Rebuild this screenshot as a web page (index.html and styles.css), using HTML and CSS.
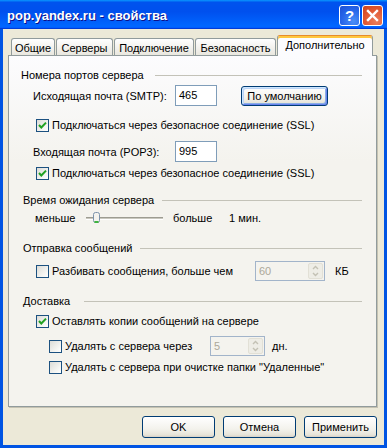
FILE: index.html
```html
<!DOCTYPE html>
<html lang="ru">
<head>
    <meta charset="UTF-8">
    <title>pop.yandex.ru - свойства</title>
    <link rel="stylesheet" href="styles.css">
</head>
<body>
    <div class="window">
        <div class="titlebar">
            <span class="title">pop.yandex.ru - свойства</span>
            <div class="title-buttons">
                <span class="tbtn help">?</span>
                <span class="tbtn close">
                    <svg width="19" height="19" viewBox="0 0 19 19"><path d="M5 5 L14 14 M14 5 L5 14" stroke="#fff" stroke-width="2.4" stroke-linecap="square"/></svg>
                </span>
            </div>
        </div>

        <div class="frame">
            <div class="tabs">
                <span class="tab tab-general">Общие</span>
                <span class="tab tab-servers">Серверы</span>
                <span class="tab tab-connect">Подключение</span>
                <span class="tab tab-security">Безопасность</span>
                <span class="tab tab-advanced active">Дополнительно</span>
            </div>

            <div class="panel">
                <div class="group-head first">
                    <span class="group-title w-ports">Номера портов сервера</span>
                    <i class="rule"></i>
                </div>
                <div class="row port-row">
                    <span class="port-label">Исходящая почта (SMTP):</span>
                    <span class="textbox">465</span>
                    <span class="button default">По умолчанию</span>
                </div>
                <div class="row cb-row ssl-1">
                    <span class="check on"><svg width="11" height="11" viewBox="0 0 11 11"><path d="M2 5 L4.3 7.5 L9 2.6" fill="none" stroke="#21a121" stroke-width="2"/></svg></span>
                    <span>Подключаться через безопасное соединение (SSL)</span>
                </div>
                <div class="row port-row pop-row">
                    <span class="port-label">Входящая почта (POP3):</span>
                    <span class="textbox">995</span>
                </div>
                <div class="row cb-row ssl-2">
                    <span class="check on"><svg width="11" height="11" viewBox="0 0 11 11"><path d="M2 5 L4.3 7.5 L9 2.6" fill="none" stroke="#21a121" stroke-width="2"/></svg></span>
                    <span>Подключаться через безопасное соединение (SSL)</span>
                </div>

                <div class="group-head">
                    <span class="group-title w-timeout">Время ожидания сервера</span>
                    <i class="rule"></i>
                </div>
                <div class="row slider-row">
                    <span class="slider-label">меньше</span>
                    <svg class="slider" width="77" height="14" viewBox="0 0 77 14">
                        <path d="M0.5 9 V6.5 H2" stroke="#9a9a90" fill="none"/>
                        <rect x="0" y="6" width="77" height="1" fill="#9d9c92"/>
                        <rect x="0" y="7" width="77" height="1" fill="#c9c8bf"/>
                        <rect x="0" y="8" width="77" height="1" fill="#fff"/>
                        <rect x="7.5" y="1.5" width="6" height="10" rx="2" fill="#f4f3ee" stroke="#7c93ab"/>
                        <rect x="8.5" y="10" width="4" height="2" fill="#3fb43f"/>
                    </svg>
                    <span class="more-label">больше</span>
                    <span>1 мин.</span>
                </div>

                <div class="group-head">
                    <span class="group-title w-send">Отправка сообщений</span>
                    <i class="rule"></i>
                </div>
                <div class="row cb-row spin-row split-row">
                    <span class="cb-text split-text">
                        <span class="check"></span>
                        <span>Разбивать сообщения, больше чем</span>
                    </span>
                    <span class="spin spin-kb">
                        <span class="spin-value">60</span>
                        <span class="spin-arrows">
                            <svg width="13" height="16" viewBox="0 0 13 16"><path d="M4 6 L6.5 3.5 L9 6 M4 10 L6.5 12.5 L9 10" fill="none" stroke="#c3c1b4" stroke-width="1.4"/></svg>
                        </span>
                    </span>
                    <span class="unit">КБ</span>
                </div>

                <div class="group-head">
                    <span class="group-title w-delivery">Доставка</span>
                    <i class="rule"></i>
                </div>
                <div class="row cb-row keep-row">
                    <span class="check on"><svg width="11" height="11" viewBox="0 0 11 11"><path d="M2 5 L4.3 7.5 L9 2.6" fill="none" stroke="#21a121" stroke-width="2"/></svg></span>
                    <span>Оставлять копии сообщений на сервере</span>
                </div>
                <div class="row cb-row spin-row sub-row days-row">
                    <span class="cb-text days-text">
                        <span class="check"></span>
                        <span>Удалять с сервера через</span>
                    </span>
                    <span class="spin spin-days">
                        <span class="spin-value">5</span>
                        <span class="spin-arrows">
                            <svg width="13" height="16" viewBox="0 0 13 16"><path d="M4 6 L6.5 3.5 L9 6 M4 10 L6.5 12.5 L9 10" fill="none" stroke="#c3c1b4" stroke-width="1.4"/></svg>
                        </span>
                    </span>
                    <span class="unit unit-days">дн.</span>
                </div>
                <div class="row cb-row sub-row trash-row">
                    <span class="check"></span>
                    <span>Удалять с сервера при очистке папки "Удаленные"</span>
                </div>
            </div>

            <div class="actions">
                <span class="button">OK</span>
                <span class="button">Отмена</span>
                <span class="button">Применить</span>
            </div>
        </div>
    </div>
</body>
</html>
```

FILE: styles.css
```css
body {
    margin: 0;
    font-family: "Liberation Sans", Arial, sans-serif;
    font-size: 11px;
    color: #000;
    background: #ece9d8;
}

.window {
    width: 387px;
    height: 448px;
    display: flex;
    flex-direction: column;
}

/* title bar */

.titlebar {
    height: 29px;
    box-sizing: border-box;
    padding: 2px 4px 0 7px;
    display: flex;
    align-items: center;
    background: linear-gradient(180deg, #0997ff, #0053ee 8%, #0050ee 40%, #06f 88%, #06f 93%, #005bff 95%, #003dd7 96%, #003dd7);
}

.title {
    color: #fff;
    font-weight: bold;
    font-size: 13px;
    text-shadow: 1px 1px #0f1089;
}

.title-buttons {
    margin-left: auto;
    display: flex;
    gap: 2px;
}

.tbtn {
    width: 21px;
    height: 21px;
    box-sizing: border-box;
    border: 1px solid #fff;
    border-radius: 3px;
    display: flex;
    align-items: center;
    justify-content: center;
}

.help {
    color: #fff;
    font-weight: bold;
    font-size: 15px;
    background: radial-gradient(circle at 70% 80%, #4a8ef8, #2563e8 60%, #1d4fd2);
}

.close {
    background: radial-gradient(circle at 70% 80%, #ec7e5c, #e05630 60%, #c9431d);
}

/* dialog frame */

.frame {
    flex: 1;
    background: #ece9d8;
    border: 3px solid #0054e3;
    border-top: 0;
    padding: 6px 0 0 5px;
}

.tabs {
    display: flex;
    align-items: flex-end;
    gap: 1px;
    height: 21px;
    margin-left: 3px;
    margin-bottom: -1px;
}

.tab {
    position: relative;
    z-index: 0;
    height: 18px;
    box-sizing: border-box;
    border: 1px solid #919b9c;
    border-bottom: 0;
    border-radius: 3px 3px 0 0;
    background: linear-gradient(#fff, #f3f2ee 50%, #e8e6dd);
    display: flex;
    align-items: center;
    justify-content: center;
}

.tab-general { width: 44px; }
.tab-servers { width: 57px; }
.tab-connect { width: 80px; }
.tab-security { width: 81px; }
.tab-advanced { width: 96px; }

.tab.active {
    z-index: 2;
    height: 21px;
    padding-bottom: 2px;
    border-top: 1px solid #e68b2c;
    background: #fcfcfe;
    box-shadow: inset 0 2px #ffc73c;
}

.panel {
    position: relative;
    z-index: 1;
    width: 369px;
    height: 352px;
    box-sizing: border-box;
    border: 1px solid #919b9c;
    background: linear-gradient(#fcfcfe, #f4f3ee 30%);
    box-shadow: 1px 1px 0 #c5c2b2;
    padding-top: 12px;
}

/* group headers */

.group-head {
    height: 14px;
    display: flex;
    align-items: center;
    margin: 13px 14px 0 14px;
}

.group-head.first {
    margin-top: 0;
    margin-left: 12px;
}

.group-title {
    white-space: nowrap;
}

.w-ports { width: 134px; }
.w-timeout { width: 139px; }
.w-send { width: 117px; }
.w-delivery { width: 61px; }

.rule {
    flex: 1;
    border-top: 1px solid #c3c2b8;
}

/* rows */

.row {
    display: flex;
    align-items: center;
    white-space: nowrap;
}

.port-row {
    height: 21px;
    margin: 3px 0 0 24px;
}

.pop-row {
    margin-top: 9px;
}

.port-label {
    width: 142px;
}

.textbox {
    width: 42px;
    height: 21px;
    box-sizing: border-box;
    border: 1px solid #7f9db9;
    background: #fff;
    padding-left: 3px;
    line-height: 19px;
}

.cb-row {
    height: 14px;
    margin: 12px 0 0 27px;
}

.ssl-2 { margin-top: 4px; }

.check {
    width: 13px;
    height: 13px;
    box-sizing: border-box;
    border: 1px solid #1c5180;
    background: linear-gradient(135deg, #dcdcd7, #f6f6f3 70%, #fff);
    margin-right: 3px;
    flex: none;
}

.check svg {
    display: block;
}

.cb-text {
    display: flex;
    align-items: center;
}

.slider-row {
    height: 20px;
    margin: 1px 0 0 26px;
}

.slider-label { width: 51px; }

.slider {
    display: block;
}

.more-label {
    margin-left: 10px;
    width: 56px;
}

.spin-row {
    height: 20px;
    margin-top: 6px;
}

.split-text { width: 219px; }

.spin {
    height: 20px;
    box-sizing: border-box;
    border: 1px solid #a2b4ca;
    display: flex;
    align-items: center;
    justify-content: space-between;
}

.spin-kb { width: 70px; }
.spin-days { width: 55px; }

.spin-value {
    color: #aca899;
    padding-left: 3px;
}

.spin-arrows {
    width: 15px;
    height: 16px;
    margin-right: 1px;
    border: 1px solid #e2e0d6;
    border-radius: 2px;
    background: #eeede6;
    box-sizing: border-box;
    display: flex;
    align-items: center;
    justify-content: center;
}

.unit { margin-left: 10px; }
.unit-days { margin-left: 7px; }

.keep-row { margin-top: 6px; }

.sub-row { margin-left: 40px; }

.days-row { margin-top: 8px; }

.days-text { width: 161px; }

.trash-row { margin-top: 4px; }

/* buttons */

.button {
    box-sizing: border-box;
    border: 1px solid #003c74;
    border-radius: 3px;
    background: linear-gradient(#fff, #f3f2ec 60%, #e6e3d8 90%, #d6d0c5);
    display: flex;
    align-items: center;
    justify-content: center;
}

.port-row .button {
    width: 87px;
    height: 20px;
    margin-left: 24px;
}

.button.default {
    box-shadow: inset 1px 1px 0 #cee7ff, inset -1px -1px 0 #6982ee, inset 2px 2px 0 #bcd4f6, inset -2px -2px 0 #89ade4;
}

.actions {
    width: 369px;
    margin-top: 9px;
    display: flex;
    justify-content: flex-end;
    gap: 8px;
}

.actions .button {
    width: 73px;
    height: 22px;
}
```
